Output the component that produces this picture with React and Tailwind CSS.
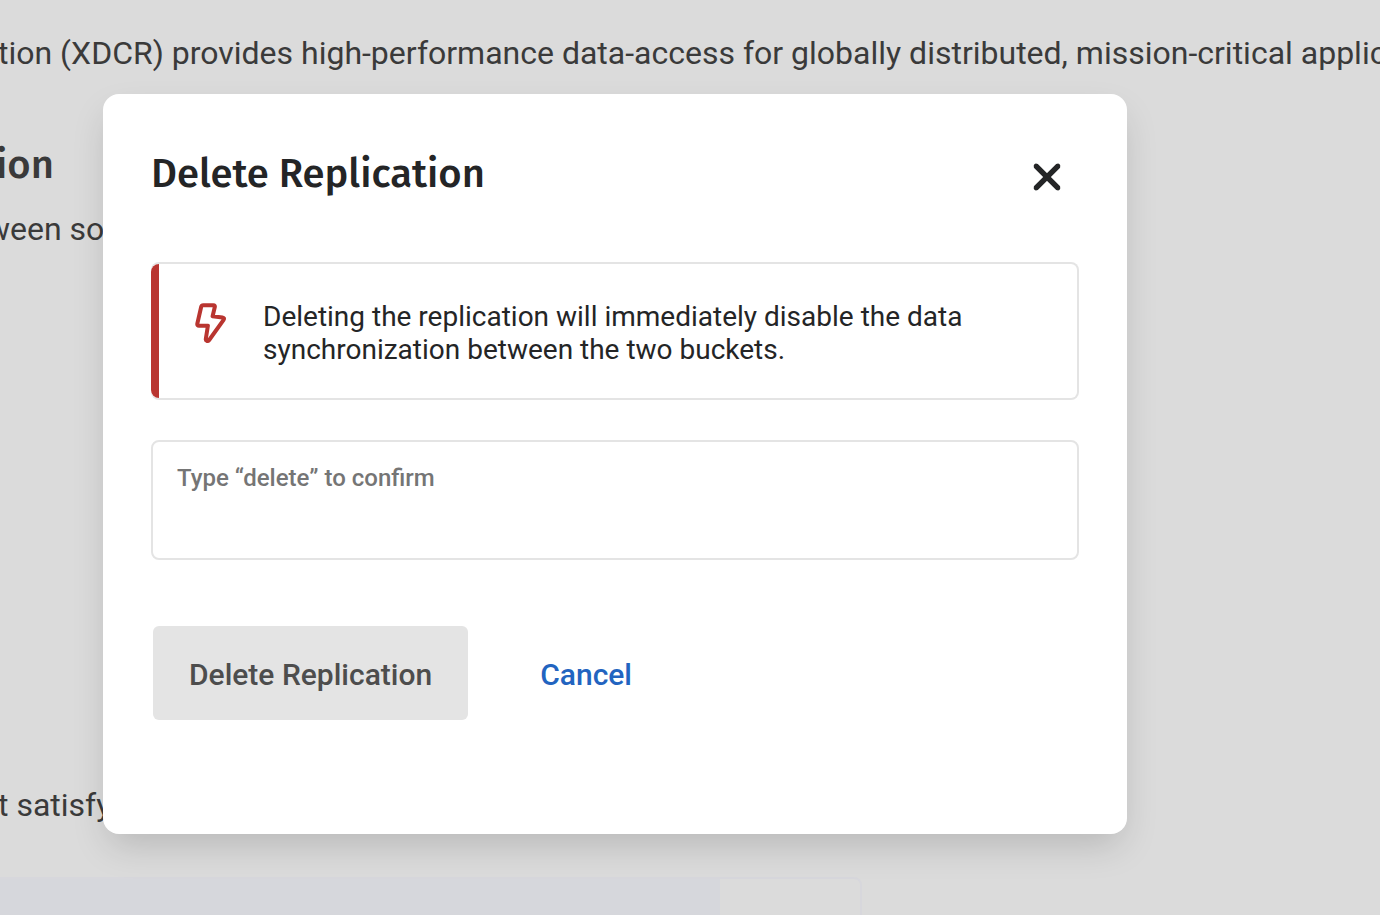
import React from "react";

function BoltIcon() {
  return (
    <svg
      className="h-10 w-8 shrink-0"
      viewBox="0 0 32 40"
      fill="none"
      stroke="#b93530"
      strokeWidth="4"
      strokeLinejoin="round"
      strokeLinecap="round"
      aria-hidden="true"
    >
      <path d="M6.2 3.8 Q6.6 2.2 8.2 2.2 H18.4 Q20.2 2.2 19.8 4 L17.6 13.2 L27.4 14.4 Q29.8 14.8 28.6 16.8 L14.2 37 Q13.2 38.4 11.8 37.8 Q10.6 37.4 10.8 36 L12.9 22.8 H4 Q2 22.8 2.3 20.8 Z" />
    </svg>
  );
}

function CloseIcon() {
  return (
    <svg className="h-8 w-8" viewBox="0 0 32 32" fill="none" stroke="#242526" strokeWidth="5.4" aria-hidden="true">
      <path d="M4.6 4.6 L27.4 27.4 M27.4 4.6 L4.6 27.4" />
      <path strokeWidth="4.6" strokeLinecap="round" d="M5 5 L27 27 M27 5 L5 27" />
    </svg>
  );
}

function PageBehind() {
  return (
    <main className="flex min-h-screen flex-col overflow-hidden whitespace-nowrap bg-[#dbdbdb] pt-[33px] text-[32px] leading-10 text-[#3a3a3a]">
      <p className="-ml-0.5">
        tion (XDCR) provides high-performance data-access for globally distributed, mission-critical applications
      </p>
      <h1 className="-ml-1 mt-16 font-['Fira_Sans','Noto_Sans',sans-serif] text-[40px] font-medium leading-14">ion</h1>
      <p className="-ml-3.5 mt-4">ween so</p>
      <p className="-ml-0.5 mt-[536px]">t satisfy</p>
      <div className="mt-[52px] flex w-[862px] grow rounded-tr-lg border-r-2 border-t-2 border-[#d7d7dc]">
        <div className="w-[720px] bg-[#d6d7dc]" />
      </div>
    </main>
  );
}

export default function App() {
  return (
    <div className="relative min-h-screen overflow-hidden font-[Roboto,sans-serif]">
      <PageBehind />
      <div className="absolute inset-0 pl-[103px] pr-[253px] pt-[94px]">
        <section
          role="dialog"
          aria-modal="true"
          aria-labelledby="dialog-title"
          className="rounded-2xl bg-white px-12 pb-[114px] pt-12 text-[#242526] shadow-[0_16px_36px_-6px_rgba(0,0,0,0.17)]"
        >
          <header className="flex items-end justify-between pr-4">
            <h2
              id="dialog-title"
              className="font-['Fira_Sans','Noto_Sans',sans-serif] text-[40px] font-medium leading-16"
            >
              Delete Replication
            </h2>
            <button type="button" aria-label="Close" className="pb-[13px]">
              <CloseIcon />
            </button>
          </header>

          <div className="mt-14 flex rounded-lg border-2 border-l-0 border-[#e4e4e4]">
            <div className="w-2 shrink-0 rounded-l-lg bg-[#b93530]" />
            <div className="flex items-start gap-9 px-9 pb-8 pt-9">
              <div className="pt-[3px]">
                <BoltIcon />
              </div>
              <p className="max-w-[740px] text-[28px] leading-[33px]">
                Deleting the replication will immediately disable the data synchronization between the two buckets.
              </p>
            </div>
          </div>

          <div className="mt-10 flex h-30 flex-col rounded-lg border-2 border-[#e4e4e4] px-6 pt-5">
            <label htmlFor="confirm" className="text-[24px] font-medium leading-8 text-[#757575]">
              Type “delete” to confirm
            </label>
            <input id="confirm" type="text" className="h-12 w-full text-[28px] outline-none" />
          </div>

          <div className="mt-[66px] flex items-center gap-9 px-0.5">
            <button
              type="button"
              disabled
              className="rounded-md bg-[#e4e4e4] px-9 pb-[25px] pt-[29px] text-[30px] font-medium leading-10 text-[#4d4d4d]"
            >
              Delete Replication
            </button>
            <button type="button" className="px-9 pb-[25px] pt-[29px] text-[30px] font-medium leading-10 text-[#2264c0]">
              Cancel
            </button>
          </div>
        </section>
      </div>
    </div>
  );
}
